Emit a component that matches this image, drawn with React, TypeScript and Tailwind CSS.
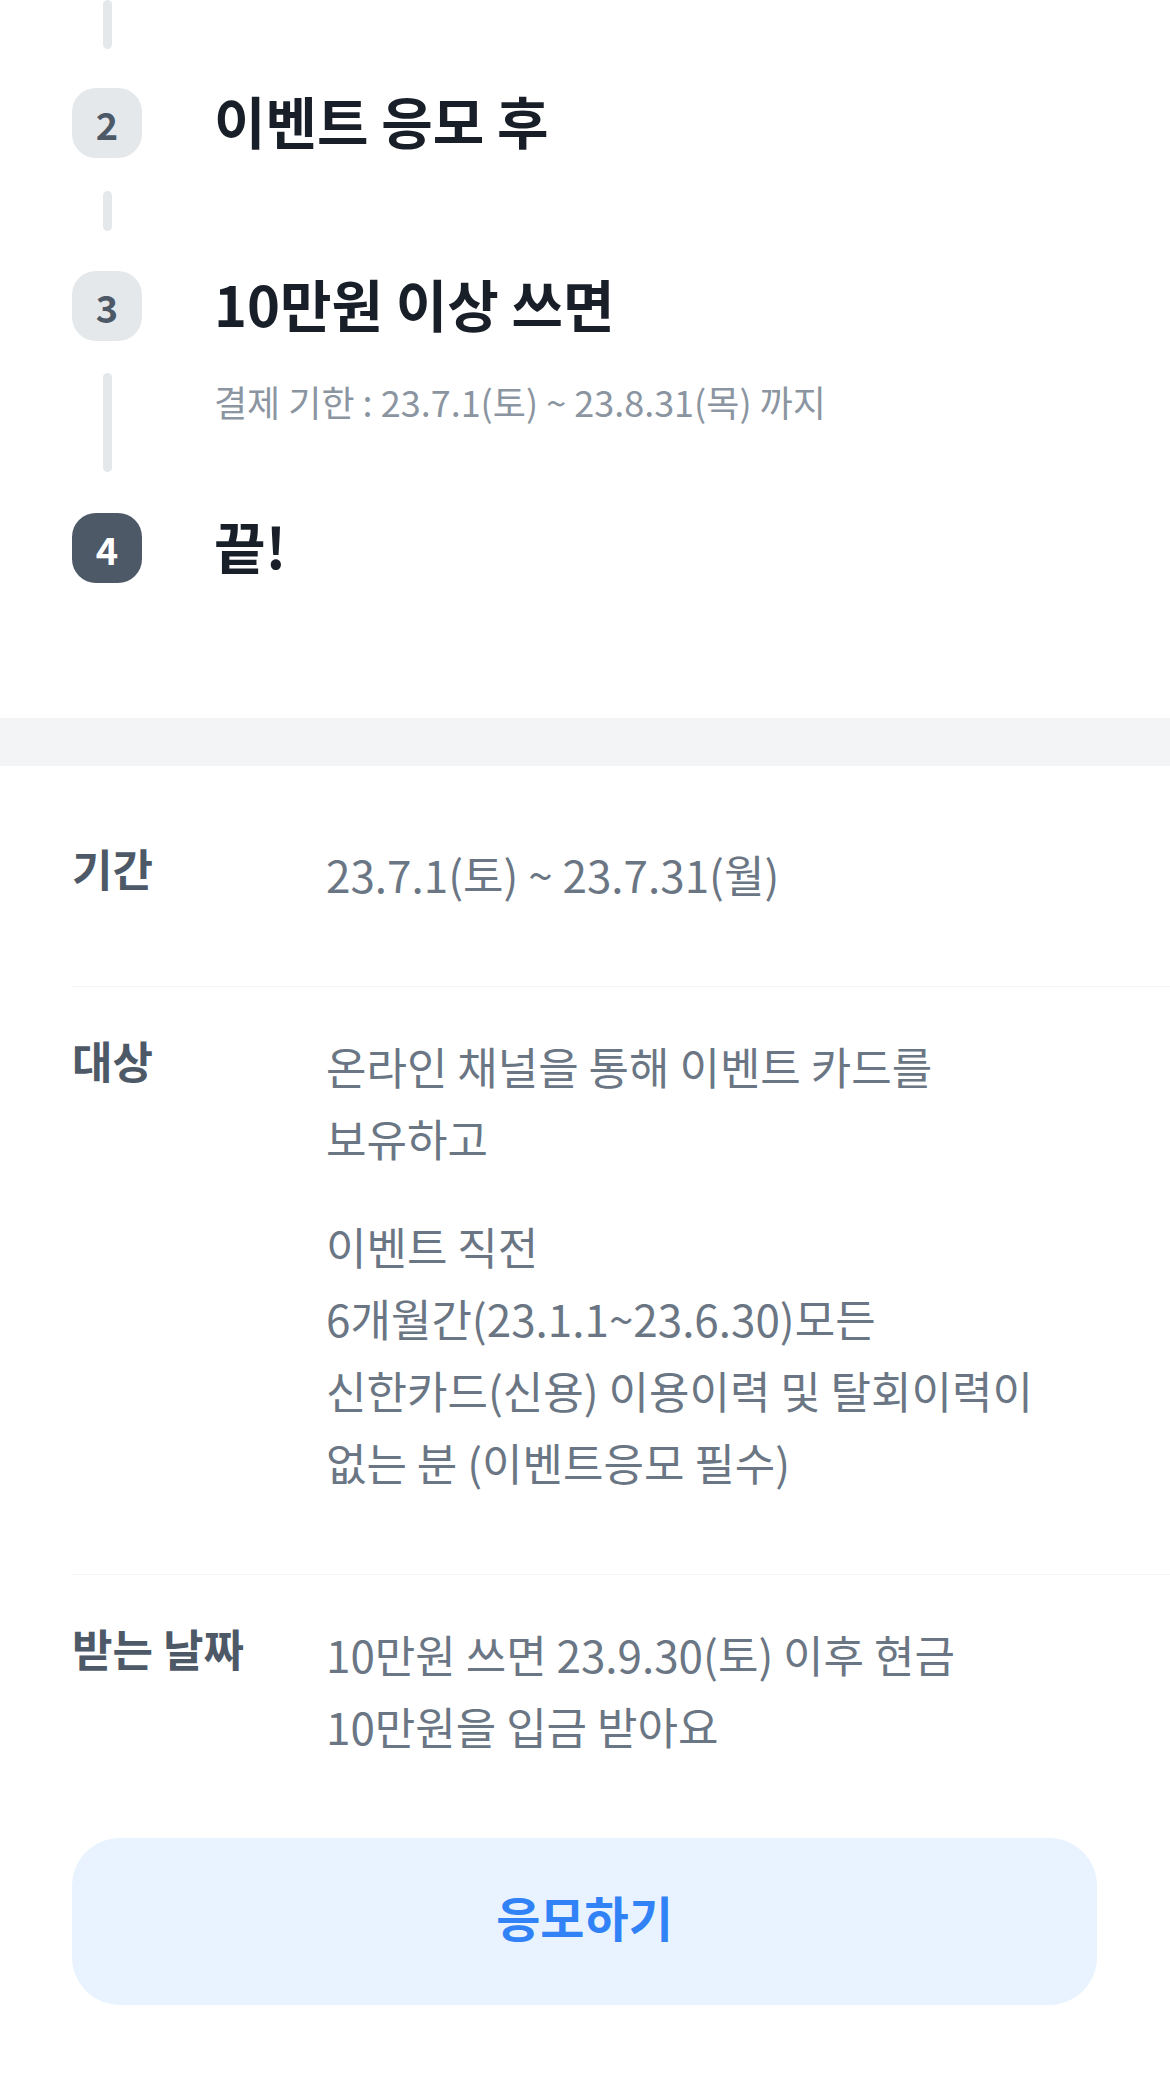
import React from 'react';

const FONT = "font-['Noto_Sans_CJK_KR',sans-serif]";

const Connector: React.FC<{ className?: string }> = ({ className = '' }) => (
  <div className="w-[70px] flex justify-center">
    <div className={`w-[9px] rounded-full bg-[#e5e8eb] ${className}`} />
  </div>
);

const Badge: React.FC<{ n: number; active?: boolean }> = ({ n, active }) => (
  <div
    className={`w-[70px] h-[70px] shrink-0 rounded-[24px] flex items-center justify-center text-[38px] font-semibold ${
      active ? 'bg-[#4e5968] text-white' : 'bg-[#e5e8eb] text-[#4e5968]'
    }`}
  >
    {n}
  </div>
);

const StepRow: React.FC<{ n: number; title: string; active?: boolean }> = ({ n, title, active }) => (
  <div className="flex items-start gap-[72px]">
    <Badge n={n} active={active} />
    <h3 className="text-[56px] leading-[64px] font-bold text-[#191f28]">{title}</h3>
  </div>
);

const InfoRow: React.FC<{ label: string; children: React.ReactNode; last?: boolean }> = ({ label, children, last }) => (
  <div className={`flex pt-[43px] pb-[76px] pr-[72px] ${last ? '' : 'border-b border-[#f2f4f6]'}`}>
    <div className="w-[254px] shrink-0 text-[44px] leading-[60px] font-bold text-[#4e5968]">{label}</div>
    <div className="flex-1 text-[44px] leading-[72px] text-[#6b7684]">{children}</div>
  </div>
);

export default function App() {
  return (
    <div className={`w-[1170px] bg-white ${FONT}`}>
      {/* Steps */}
      <div className="px-[72px] pb-[135px]">
        <Connector className="h-[49px]" />
        <div className="mt-[39px]">
          <StepRow n={2} title="이벤트 응모 후" />
        </div>
        <Connector className="h-[40px] mt-[33px] mb-[40px]" />
        <StepRow n={3} title="10만원 이상 쓰면" />
        <div className="flex gap-[72px] mt-[32px] mb-[41px]">
          <Connector className="h-[99px]" />
          <p className="pt-[4px] text-[36px] leading-[48px] text-[#8b95a1]">
            결제 기한 : 23.7.1(토) ~ 23.8.31(목) 까지
          </p>
        </div>
        <StepRow n={4} title="끝!" active />
      </div>

      <div className="h-[48px] bg-[#f2f4f6]" />

      {/* Info */}
      <div className="pl-[72px] pt-[29px]">
        <InfoRow label="기간">23.7.1(토) ~ 23.7.31(월)</InfoRow>
        <InfoRow label="대상">
          <p>
            온라인 채널을 통해 이벤트 카드를
            <br />
            보유하고
          </p>
          <p className="mt-[36px]">
            이벤트 직전
            <br />
            6개월간(23.1.1~23.6.30)모든
            <br />
            신한카드(신용) 이용이력 및 탈회이력이
            <br />
            없는 분 (이벤트응모 필수)
          </p>
        </InfoRow>
        <InfoRow label="받는 날짜" last>
          10만원 쓰면 23.9.30(토) 이후 현금
          <br />
          10만원을 입금 받아요
        </InfoRow>

        <div className="pr-[73px] pb-[93px]">
          <button className="w-full h-[167px] pb-[12px] rounded-[48px] bg-[#e8f3ff] text-[#3182f6] text-[48px] font-semibold">
            응모하기
          </button>
        </div>
      </div>
    </div>
  );
}
